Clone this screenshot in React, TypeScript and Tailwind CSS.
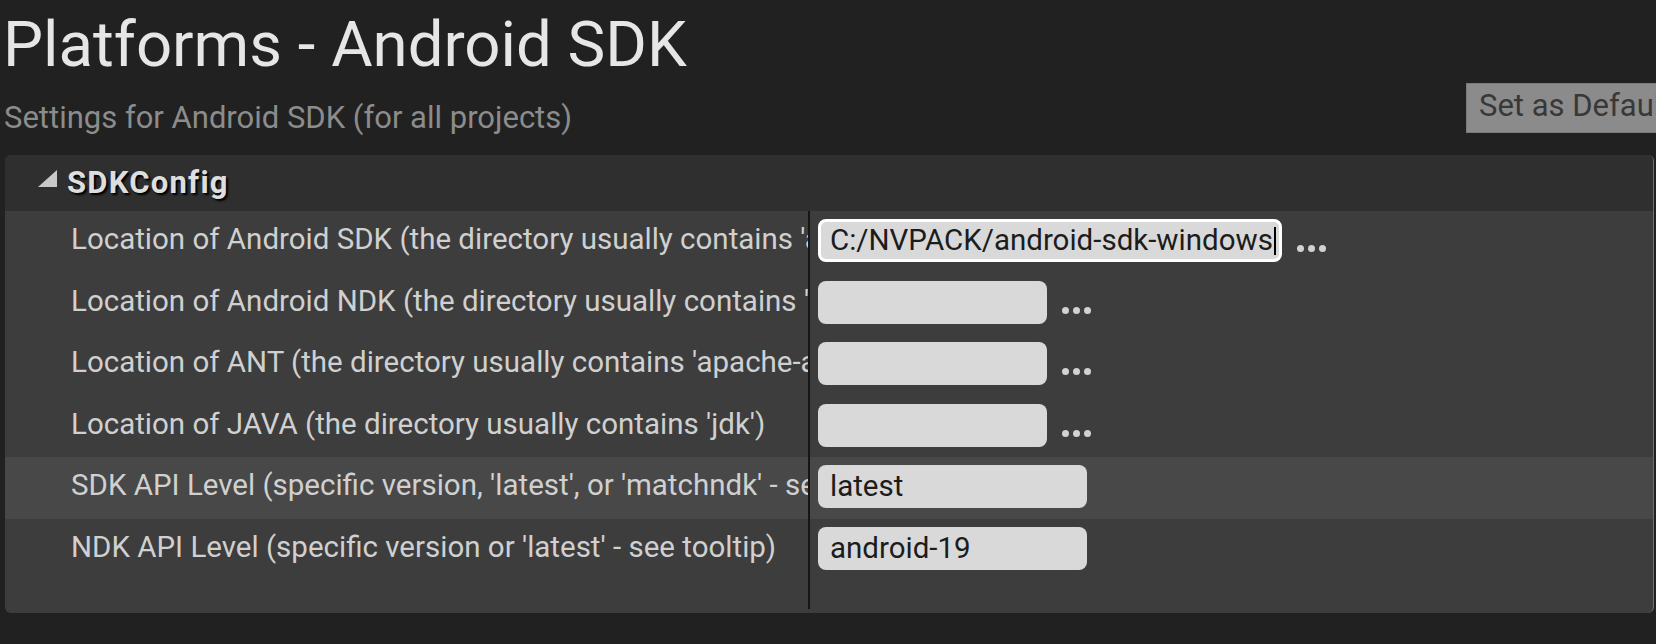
type Row = {
  label: string
  value: string
  width: string
  dots?: boolean
  focused?: boolean
  hover?: boolean
}

const rows: Row[] = [
  {
    label: "Location of Android SDK (the directory usually contains 'android-sdk-')",
    value: 'C:/NVPACK/android-sdk-windows',
    width: 'w-[464px]',
    dots: true,
    focused: true,
  },
  {
    label: "Location of Android NDK (the directory usually contains 'android-ndk-')",
    value: '',
    width: 'w-[229px]',
    dots: true,
  },
  {
    label: "Location of ANT (the directory usually contains 'apache-ant-')",
    value: '',
    width: 'w-[229px]',
    dots: true,
  },
  {
    label: "Location of JAVA (the directory usually contains 'jdk')",
    value: '',
    width: 'w-[229px]',
    dots: true,
  },
  {
    label: "SDK API Level (specific version, 'latest', or 'matchndk' - see tooltip)",
    value: 'latest',
    width: 'w-[269px]',
    hover: true,
  },
  {
    label: "NDK API Level (specific version or 'latest' - see tooltip)",
    value: 'android-19',
    width: 'w-[269px]',
  },
]

const Dots = () => (
  <div className="ml-[15px] mt-[26px] flex gap-[4px]">
    <span className="size-[7px] rounded-full bg-[#d2d2d2]" />
    <span className="size-[7px] rounded-full bg-[#d2d2d2]" />
    <span className="size-[7px] rounded-full bg-[#d2d2d2]" />
  </div>
)

const SettingRow = ({ row }: { row: Row }) => (
  <div
    className={`grid h-[61.5px] grid-cols-[803px_1fr] ${
      row.hover ? 'bg-[#484848]' : 'bg-[#3d3d3d]'
    }`}
  >
    <div className="overflow-hidden whitespace-nowrap pl-[66px] pr-[2px] pt-[11px] text-[29.5px] leading-[35px] text-[#d0d0d0]">
      {row.label}
    </div>
    <div className="flex items-start border-l-2 border-[#161616] pl-[8px] pt-[8px]">
      <div
        className={`flex h-[43px] items-center rounded-[8px] border-[3px] bg-[#d9d9d9] pl-[9px] text-[29.5px] leading-[35px] text-[#1c1c1c] ${
          row.width
        } ${row.focused ? 'border-white' : 'border-transparent'}`}
      >
        <span className="whitespace-nowrap">{row.value}</span>
        {row.focused && <span className="ml-[1px] h-[28px] w-[2px] bg-black" />}
      </div>
      {row.dots && <Dots />}
    </div>
  </div>
)

export default function App() {
  return (
    <div className="h-[644px] w-full overflow-hidden bg-[#212121] font-['Roboto',sans-serif]">
      <div className="flex h-[155px] items-start">
        <div className="w-[1466px] shrink-0 pt-[8px]">
          <h1 className="whitespace-nowrap pl-[3px] text-[63.5px] leading-[74px] text-[#e6e6e6]">
            Platforms - Android SDK
          </h1>
          <p className="mt-[18px] whitespace-nowrap pl-[4px] text-[31px] leading-[36px] text-[#8c8c8c]">
            Settings for Android SDK (for all projects)
          </p>
        </div>
        <button className="mt-[83px] flex h-[50px] shrink-0 items-start whitespace-nowrap border border-[#7a7a7a] bg-[#8b8b8b] pl-[12px] pr-[20px] pt-[4px] text-[31px] leading-[36px] text-[#383838]">
          Set as Default
        </button>
      </div>

      <div className="ml-[5px] mr-[2px] overflow-hidden rounded-[6px] border-r border-[#707070] bg-[#3d3d3d] pb-[4px]">
        <div className="flex h-[56px] items-center bg-[#2f2f2f]">
          <svg
            className="ml-[33px] mt-[15px] self-start"
            width="19"
            height="17"
            viewBox="0 0 19 17"
          >
            <polygon points="19,0 19,17 0,17" fill="#c9c9c9" />
          </svg>
          <span className="ml-[10px] text-[31px] font-bold leading-[36px] tracking-[0.04em] text-[#dedede] [text-shadow:2px_2px_2px_#000]">
            SDKConfig
          </span>
        </div>
        {rows.map((row) => (
          <SettingRow key={row.label} row={row} />
        ))}
        <div className="grid h-[29px] grid-cols-[803px_1fr]">
          <div />
          <div className="border-l-2 border-[#161616]" />
        </div>
      </div>
    </div>
  )
}
